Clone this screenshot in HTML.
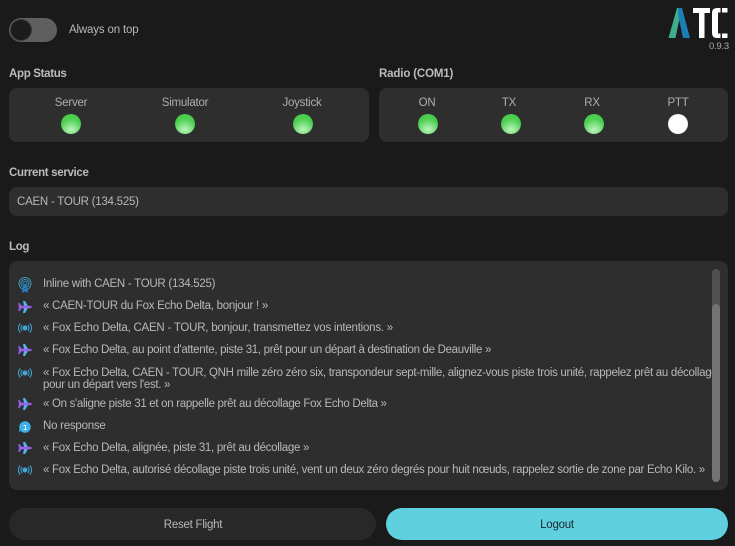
<!DOCTYPE html>
<html><head><meta charset="utf-8"><style>
html,body{margin:0;padding:0;background:#1a1a1a}
body{width:735px;height:546px;position:relative;overflow:hidden;font-family:"Liberation Sans",sans-serif;font-size:11.5px;color:#b8b8b8;letter-spacing:-.24px}
.a{position:absolute;white-space:nowrap}
.t{position:absolute;white-space:nowrap;line-height:18px}
.h{font-weight:bold;color:#bcbcbc;font-size:11.5px;letter-spacing:-.32px;line-height:14px}
.p{position:absolute;background:#2e2e2e;border-radius:8px}
.c{transform:translateX(-50%);color:#aeaeae}
.l{position:absolute;width:20px;height:20px;border-radius:50%;background:radial-gradient(ellipse 60% 50% at 50% 78%,#bff2bf 0%,#86e388 50%,transparent 100%),radial-gradient(circle at 50% 45%,#58d65b 0%,#48cc4c 60%,#2aa830 100%)}
.w{background:radial-gradient(circle at 50% 50%,#fff 55%,#e4e4e4 100%)}
.i{position:absolute;left:17px;width:16px;height:16px}
</style></head><body>
<div class="a" style="left:9px;top:18px;width:48px;height:24px;border-radius:12px;background:#5f5f5f"></div>
<div class="a" style="left:10px;top:19px;width:22px;height:22px;border-radius:50%;background:#3a3a3a"></div>
<div class="a" style="left:11px;top:20px;width:20px;height:20px;border-radius:50%;background:#1c1c1c"></div>
<div class="t" style="left:69px;top:21px;letter-spacing:-.16px">Always on top</div>

<svg class="a" style="left:660px;top:0" width="75" height="45" viewBox="660 0 75 45">
<path d="M668.500 38 L677 8 L681 8 L680 16 L675.500 38Z" fill="#3fae8e"/>
<path d="M678 8 L682 8 L690 38 L683 38 L678.500 17Z" fill="#1b7fb5"/>
<path d="M693 8h17v5h-5.500v25h-5.500V13h-6z" fill="#fff"/>
<path d="M717 8h3.500v4.500h-2.500v21h2.500V38H717q-5 0-5-5V13q0-5 5-5z" fill="#fff"/>
<rect x="722" y="8" width="5.500" height="4.500" fill="#fff"/><rect x="722" y="33.500" width="5.500" height="4.500" fill="#fff"/>
</svg>
<div class="t" style="left:709px;top:38px;font-size:9.5px;letter-spacing:-.25px;color:#aaa">0.9.3</div>

<div class="t h" style="left:9px;top:67px">App Status</div>
<div class="t h" style="left:379px;top:67px;letter-spacing:-.15px">Radio (COM1)</div>
<div class="p" style="left:9px;top:88px;width:360px;height:54px"></div>
<div class="p" style="left:379px;top:88px;width:349px;height:54px"></div>
<div class="t c" style="left:71px;top:94px">Server</div>
<div class="t c" style="left:185px;top:94px">Simulator</div>
<div class="t c" style="left:302px;top:94px">Joystick</div>
<div class="l" style="left:61px;top:114px"></div>
<div class="l" style="left:175px;top:114px"></div>
<div class="l" style="left:293px;top:114px"></div>
<div class="t c" style="left:427px;top:94px">ON</div>
<div class="t c" style="left:509px;top:94px">TX</div>
<div class="t c" style="left:592px;top:94px">RX</div>
<div class="t c" style="left:678px;top:94px">PTT</div>
<div class="l" style="left:418px;top:114px"></div>
<div class="l" style="left:501px;top:114px"></div>
<div class="l" style="left:584px;top:114px"></div>
<div class="l w" style="left:668px;top:114px"></div>

<div class="t h" style="left:9px;top:166px">Current service</div>
<div class="p" style="left:9px;top:187px;width:719px;height:29px"></div>
<div class="t" style="left:17px;top:193px">CAEN - TOUR (134.525)</div>

<div class="t h" style="left:9px;top:240px">Log</div>
<div class="p" style="left:9px;top:261px;width:719px;height:229px"></div>

<svg class="i" style="top:277px" viewBox="0 0 16 16" fill="none" stroke="#3a9cb8" stroke-width="1"><circle cx="8" cy="6.500" r="6"/><circle cx="8" cy="6.500" r="4"/><circle cx="8" cy="6.500" r="2" stroke="#2a8fd0"/><path d="M8 7 L5.500 15.500 M8 7 L10.500 15.500 M6 14h4" stroke="#1f7fd8" stroke-width="1.500"/></svg>
<div class="t" style="left:43px;top:275px;letter-spacing:-.27px">Inline with CAEN - TOUR (134.525)</div>

<svg class="i" style="top:299px" viewBox="0 0 16 16"><path d="M6 2 L8 2 L11 7 L11 9 L8 14 L6 14 L7 9 L7 7Z" fill="#4fb6ea"/><path d="M1 4 L2.500 4 L5 7 L5 9 L2.500 12 L1 12 L2 8Z" fill="#8a5ae0"/><path d="M2 6.700H12.500Q15 7.200 15 8Q15 8.800 12.500 9.300H2Z" fill="#9b5fe8"/></svg>
<div class="t" style="left:43px;top:297px;letter-spacing:-.27px">« CAEN-TOUR du Fox Echo Delta, bonjour ! »</div>

<svg class="i" style="top:320px" viewBox="0 0 16 16" fill="none" stroke="#3fa9d8" stroke-width="1"><circle cx="8" cy="8" r="2" fill="#3fa9d8"/><path d="M5.200 5a4.200 4.200 0 0 0 0 6M10.800 5a4.200 4.200 0 0 1 0 6M3.300 3.500a6.500 6.500 0 0 0 0 9M12.700 3.500a6.500 6.500 0 0 1 0 9"/></svg>
<div class="t" style="left:43px;top:319px;letter-spacing:-.23px">« Fox Echo Delta, CAEN - TOUR, bonjour, transmettez vos intentions. »</div>

<svg class="i" style="top:342px" viewBox="0 0 16 16"><path d="M6 2 L8 2 L11 7 L11 9 L8 14 L6 14 L7 9 L7 7Z" fill="#4fb6ea"/><path d="M1 4 L2.500 4 L5 7 L5 9 L2.500 12 L1 12 L2 8Z" fill="#8a5ae0"/><path d="M2 6.700H12.500Q15 7.200 15 8Q15 8.800 12.500 9.300H2Z" fill="#9b5fe8"/></svg>
<div class="t" style="left:43px;top:341px;letter-spacing:-.31px">« Fox Echo Delta, au point d'attente, piste 31, prêt pour un départ à destination de Deauville »</div>

<svg class="i" style="top:365px" viewBox="0 0 16 16" fill="none" stroke="#3fa9d8" stroke-width="1"><circle cx="8" cy="8" r="2" fill="#3fa9d8"/><path d="M5.200 5a4.200 4.200 0 0 0 0 6M10.800 5a4.200 4.200 0 0 1 0 6M3.300 3.500a6.500 6.500 0 0 0 0 9M12.700 3.500a6.500 6.500 0 0 1 0 9"/></svg>
<div class="t" style="left:43px;top:364px;letter-spacing:-.3px">« Fox Echo Delta, CAEN - TOUR, QNH mille zéro zéro six, transpondeur sept-mille, alignez-vous piste trois unité, rappelez prêt au décollage</div>
<div class="t" style="left:43px;top:376px;letter-spacing:-.31px">pour un départ vers l'est. »</div>

<svg class="i" style="top:396px" viewBox="0 0 16 16"><path d="M6 2 L8 2 L11 7 L11 9 L8 14 L6 14 L7 9 L7 7Z" fill="#4fb6ea"/><path d="M1 4 L2.500 4 L5 7 L5 9 L2.500 12 L1 12 L2 8Z" fill="#8a5ae0"/><path d="M2 6.700H12.500Q15 7.200 15 8Q15 8.800 12.500 9.300H2Z" fill="#9b5fe8"/></svg>
<div class="t" style="left:43px;top:395px;letter-spacing:-.31px">« On s'aligne piste 31 et on rappelle prêt au décollage Fox Echo Delta »</div>

<svg class="i" style="top:419px" viewBox="0 0 16 16"><path d="M8 2.200a5.800 5.800 0 1 1-4.500 9.500L2 13.300 2.500 9.700A5.800 5.800 0 0 1 8 2.200z" fill="#3fb0ea"/><path d="M6.500 6.500h2v4M6.500 10.500h3.500" stroke="#d8f2ff" fill="none"/></svg>
<div class="t" style="left:43px;top:417px">No response</div>

<svg class="i" style="top:440px" viewBox="0 0 16 16"><path d="M6 2 L8 2 L11 7 L11 9 L8 14 L6 14 L7 9 L7 7Z" fill="#4fb6ea"/><path d="M1 4 L2.500 4 L5 7 L5 9 L2.500 12 L1 12 L2 8Z" fill="#8a5ae0"/><path d="M2 6.700H12.500Q15 7.200 15 8Q15 8.800 12.500 9.300H2Z" fill="#9b5fe8"/></svg>
<div class="t" style="left:43px;top:439px;letter-spacing:-.295px">« Fox Echo Delta, alignée, piste 31, prêt au décollage »</div>

<svg class="i" style="top:462px" viewBox="0 0 16 16" fill="none" stroke="#3fa9d8" stroke-width="1"><circle cx="8" cy="8" r="2" fill="#3fa9d8"/><path d="M5.200 5a4.200 4.200 0 0 0 0 6M10.800 5a4.200 4.200 0 0 1 0 6M3.300 3.500a6.500 6.500 0 0 0 0 9M12.700 3.500a6.500 6.500 0 0 1 0 9"/></svg>
<div class="t" style="left:43px;top:461px;letter-spacing:-.29px">« Fox Echo Delta, autorisé décollage piste trois unité, vent un deux zéro degrés pour huit nœuds, rappelez sortie de zone par Echo Kilo. »</div>

<div class="a" style="left:712px;top:269px;width:8px;height:213px;border-radius:4px;background:#545454;opacity:.92"></div>
<div class="a" style="left:712px;top:304px;width:8px;height:178px;border-radius:4px;background:#737373"></div>

<div class="a" style="left:9px;top:508px;width:367px;height:32px;border-radius:16px;background:#282828"></div>
<div class="t" style="left:193px;top:516px;transform:translateX(-50%)">Reset Flight</div>
<div class="a" style="left:386px;top:508px;width:342px;height:32px;border-radius:16px;background:#5fd0e0"></div>
<div class="t" style="left:557px;top:516px;transform:translateX(-50%);color:#1c2a2e">Logout</div>
</body></html>
